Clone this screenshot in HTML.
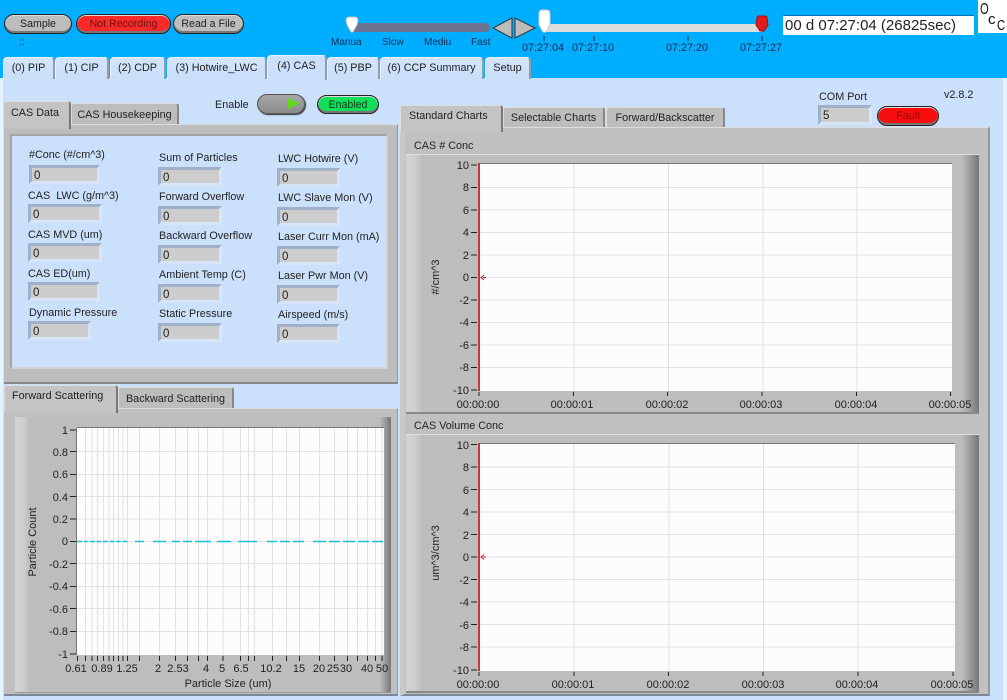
<!DOCTYPE html>
<html><head><meta charset="utf-8"><style>
html,body{margin:0;padding:0}
body{width:1007px;height:700px;position:relative;overflow:hidden;background:#cbe0fb;font:10.8px "Liberation Sans",sans-serif;color:#222}
div{position:absolute;box-sizing:border-box}
.t{white-space:nowrap;line-height:14px}
.tab{background:linear-gradient(#d4e5fb,#c9def9);border-top:1px solid #e8f2ff;border-left:1px solid #e8f2ff;border-right:2px solid #8f9db0;border-radius:4px 4px 0 0;text-align:center;line-height:21px;white-space:nowrap;height:22px;top:57px}
.gt{background:#bdbdbd;border-top:1px solid #ddd;border-left:1px solid #ddd;border-right:2px solid #888;border-radius:3px 3px 0 0;text-align:center;white-space:nowrap}
.on{background:#c4c4c4}
.b{background:#cdcdcd;border:3px solid;border-color:#9fb0c8 #d6e5f8 #d6e5f8 #9fb0c8;height:19px;padding-left:2px;line-height:16px;font-size:11.500px}
.o{border-radius:10px;border:1px solid #222;box-shadow:inset 0 -2px 0 #777,inset 0 1px 0 #ddd;text-align:center;line-height:19px;white-space:nowrap;font-size:10.6px}
.n{font-size:10px;color:#1a2a55;white-space:nowrap;line-height:12px}
svg{position:absolute;left:0;top:0}
svg text{font:11px "Liberation Sans",sans-serif;fill:#222}
</style></head><body>
<div style="left:0;top:0;width:1007px;height:78px;background:#00aeff"></div>
<div style="left:0;top:78px;width:3px;height:622px;background:#e4f4ff"></div>
<div style="left:1003px;top:78px;width:4px;height:622px;background:#e4f4ff"></div>

<div class="o" style="left:4px;top:14px;width:68px;height:20px;background:#bdbdbd">Sample</div>
<div class="o" style="left:76px;top:14px;width:95px;height:20px;background:#fb2a2a;color:#701010">Not Recording</div>
<div class="o" style="left:173px;top:14px;width:71px;height:20px;background:#bdbdbd">Read a File</div>
<div class="n" style="left:19px;top:37px">::</div>

<div style="left:352px;top:23px;width:138px;height:9px;background:#6b7390;border-radius:0 5px 5px 0"></div>
<div class="n" style="left:331px;top:37px">Manua</div><div class="n" style="left:382px;top:37px">Slow</div><div class="n" style="left:424px;top:37px">Mediu</div><div class="n" style="left:471px;top:37px">Fast</div>
<div style="left:545px;top:24px;width:217px;height:8px;background:#dcdcdc"></div>
<div class="n" style="left:522px;top:42px;font-size:10.800px">07:27:04</div><div class="n" style="left:572px;top:42px;font-size:10.800px">07:27:10</div><div class="n" style="left:666px;top:42px;font-size:10.800px">07:27:20</div><div class="n" style="left:740px;top:42px;font-size:10.800px">07:27:27</div>
<div style="left:783px;top:15px;width:191px;height:20px;background:#fff;border-top:1px solid #0a6fb0;font-size:15px;line-height:19px;padding-left:2px;color:#222;white-space:nowrap">00 d 07:27:04 (26825sec)</div>
<div style="left:978px;top:0;width:29px;height:33px;background:#fff"></div>
<div class="t" style="left:980px;top:3px;font-size:16px;color:#111;transform:scaleX(.7);transform-origin:0 0">O</div>
<div class="t" style="left:988px;top:13px;font-size:15px;color:#111">c</div>
<div class="t" style="left:997px;top:19px;font-size:15px;color:#111;transform:scaleX(.75);transform-origin:0 0">C</div>

<div class="tab" style="left:3px;width:52px">(0) PIP</div>
<div class="tab" style="left:55px;width:54px">(1) CIP</div>
<div class="tab" style="left:110px;width:56px">(2) CDP</div>
<div class="tab" style="left:167px;width:100px">(3) Hotwire_LWC</div>
<div class="tab" style="left:267px;top:55px;width:60px;height:25px;background:#cbe0fb;line-height:20px">(4) CAS</div>
<div class="tab" style="left:327px;width:53px">(5) PBP</div>
<div class="tab" style="left:380px;width:104px">(6) CCP Summary</div>
<div class="tab" style="left:485px;width:46px">Setup</div>

<div class="t" style="left:215px;top:98px">Enable</div>
<div style="left:257px;top:94px;width:48px;height:20px;border-radius:10px;background:linear-gradient(#a8a8a8,#8a8a8a);border:1px solid #555;box-shadow:1px 1px 1px #333"></div>
<div class="o" style="left:317px;top:95px;width:62px;height:19px;background:#12e05a;color:#064018">Enabled</div>

<div class="gt" style="left:71px;top:103px;width:108px;height:22px;line-height:23px">CAS Housekeeping</div>
<div style="left:4px;top:124px;width:394px;height:260px;background:#bdbdbd;border-top:1px solid #ddd;border-right:1px solid #999;border-bottom:2px solid #888"></div>
<div class="gt on" style="left:3px;top:101px;width:68px;height:28px;line-height:22px;border-right:2px solid #777;text-align:left;padding-left:7px">CAS Data</div>
<div style="left:10px;top:134px;width:378px;height:235px;background:#cbe0fb;border:2px solid;border-color:#a4a4a4 #d2d2d2 #d2d2d2 #a4a4a4"></div>

<div class="t" style="left:29px;top:148px">#Conc (#/cm^3)</div><div class="b" style="left:29px;top:165px;width:71px">0</div>
<div class="t" style="left:28px;top:189px">CAS&nbsp; LWC (g/m^3)</div><div class="b" style="left:28px;top:204px;width:74px">0</div>
<div class="t" style="left:28px;top:228px">CAS MVD (um)</div><div class="b" style="left:28px;top:243px;width:74px">0</div>
<div class="t" style="left:28px;top:267px">CAS ED(um)</div><div class="b" style="left:28px;top:282px;width:72px">0</div>
<div class="t" style="left:29px;top:306px">Dynamic Pressure</div><div class="b" style="left:28px;top:321px;width:63px">0</div>
<div class="t" style="left:159px;top:151px">Sum of Particles</div><div class="b" style="left:158px;top:167px;width:64px">0</div>
<div class="t" style="left:159px;top:190px">Forward Overflow</div><div class="b" style="left:158px;top:206px;width:64px">0</div>
<div class="t" style="left:159px;top:229px">Backward Overflow</div><div class="b" style="left:158px;top:245px;width:64px">0</div>
<div class="t" style="left:159px;top:268px">Ambient Temp (C)</div><div class="b" style="left:158px;top:284px;width:64px">0</div>
<div class="t" style="left:159px;top:307px">Static Pressure</div><div class="b" style="left:158px;top:323px;width:64px">0</div>
<div class="t" style="left:278px;top:152px">LWC Hotwire (V)</div><div class="b" style="left:277px;top:168px;width:63px">0</div>
<div class="t" style="left:278px;top:191px">LWC Slave Mon (V)</div><div class="b" style="left:277px;top:207px;width:63px">0</div>
<div class="t" style="left:278px;top:230px">Laser Curr Mon (mA)</div><div class="b" style="left:277px;top:246px;width:63px">0</div>
<div class="t" style="left:278px;top:269px">Laser Pwr Mon (V)</div><div class="b" style="left:277px;top:285px;width:63px">0</div>
<div class="t" style="left:278px;top:308px">Airspeed (m/s)</div><div class="b" style="left:277px;top:324px;width:63px">0</div>

<div class="gt" style="left:118px;top:387px;width:116px;height:22px;line-height:22px">Backward Scattering</div>
<div style="left:4px;top:408px;width:394px;height:288px;background:#c0c0c0;border-top:1px solid #ddd;border-right:1px solid #999;border-bottom:2px solid #7d8896"></div>
<div class="gt on" style="left:4px;top:385px;width:114px;height:28px;line-height:21px;border-right:2px solid #777;text-align:left;padding-left:7px">Forward Scattering</div>
<div style="left:15px;top:417px;width:376px;height:276px;background:linear-gradient(90deg,#d4d4d4,#d0d0d0 8px,#bdbdbd 14px,#bdbdbd 97%,#777);border-bottom:1px solid #999"></div>

<div class="gt" style="left:503px;top:107px;width:102px;height:21px;line-height:21px">Selectable Charts</div>
<div class="gt" style="left:606px;top:107px;width:119px;height:21px;line-height:21px">Forward/Backscatter</div>
<div style="left:400px;top:127px;width:590px;height:569px;background:#c0c0c0;border-top:1px solid #ddd;border-left:5px solid #c9c9c9;border-right:2px solid #999;border-bottom:2px solid #7d8896"></div>
<div class="gt on" style="left:400px;top:105px;width:103px;height:27px;line-height:20px;border-right:2px solid #777;text-align:left;padding-left:8px">Standard Charts</div>
<div class="t" style="left:414px;top:139px">CAS # Conc</div>
<div style="left:406px;top:154px;width:573px;height:260px;background:linear-gradient(90deg,#d2d2d2,#d0d0d0 8px,#bdbdbd 16px,#bdbdbd 97%,#777);border-top:1px solid #ddd;border-bottom:2px solid #888"></div>
<div class="t" style="left:414px;top:419px">CAS Volume Conc</div>
<div style="left:406px;top:434px;width:573px;height:259px;background:linear-gradient(90deg,#d2d2d2,#d0d0d0 8px,#bdbdbd 16px,#bdbdbd 97%,#777);border-top:1px solid #ddd;border-bottom:2px solid #888"></div>

<div class="t" style="left:819px;top:90px">COM Port</div>
<div class="b" style="left:818px;top:105px;width:54px;height:20px">5</div>
<div class="o" style="left:877px;top:106px;width:62px;height:20px;background:#f70d0d;color:#7a1010">Fault</div>
<div class="t" style="left:944px;top:88px">v2.8.2</div>

<svg width="1007" height="700" viewBox="0 0 1007 700">
<path d="M346 21q0-4 3-4h6q3 0 3 4l-1 4l-4 7h-2l-4-7z" fill="#fff" stroke="#bbb"/>
<path d="M512 18v20l-19-10z" fill="#bdbdbd" stroke="#333"/>
<path d="M515 18v20l20-10z" fill="#bdbdbd" stroke="#333"/>
<path d="M539 14q0-4 3-4h5q3 0 3 4v11l-4 7h-3l-4-7z" fill="#fff" stroke="#ccc"/>
<path d="M757 18q0-2 2-2h6q2 0 2 2l1 7l-4 6h-4l-4-6z" fill="#e21c1c" stroke="#a01010"/>
<path d="M544 36v5M594 36v5M688 36v5M762 36v5" stroke="#223" fill="none"/>
<path d="M288 98v11l12-5.500z" fill="#5fd81e"/>

<!-- chart 1 -->
<rect x="480" y="164" width="472" height="227" fill="#fcfcfc"/>
<path d="M480 187.500H952M480 210H952M480 232.500H952M480 255H952M480 277.500H952M480 300H952M480 322.500H952M480 345H952M480 367.500H952M574 164V391M668.500 164V391M763 164V391M857 164V391" stroke="#e2e2e2" fill="none"/>
<path d="M480 163.500H952" stroke="#777"/>
<path d="M479 163V391" stroke="#c43a3a" stroke-width="2"/>
<path d="M471 165h6M471 187.500h6M471 210h6M471 232.500h6M471 255h6M471 277.500h6M471 300h6M471 322.500h6M471 345h6M471 367.500h6M471 390h6M479 392v4M573.500 392v4M667.500 392v4M762 392v4M856.500 392v4M950.500 392v4" stroke="#222" fill="none"/>
<path d="M484 275l-3 2.500l3 2.500M483 277.500h3" stroke="#d01030" fill="none"/>
<g text-anchor="end"><text x="469" y="169">10</text><text x="469" y="191">8</text><text x="469" y="214">6</text><text x="469" y="236">4</text><text x="469" y="259">2</text><text x="469" y="281">0</text><text x="469" y="304">-2</text><text x="469" y="326">-4</text><text x="469" y="349">-6</text><text x="469" y="371">-8</text><text x="469" y="394">-10</text></g>
<g text-anchor="middle"><text x="478" y="408">00:00:00</text><text x="572" y="408">00:00:01</text><text x="667" y="408">00:00:02</text><text x="761" y="408">00:00:03</text><text x="856" y="408">00:00:04</text><text x="950" y="408">00:00:05</text>
<text transform="translate(439 277) rotate(-90)">#/cm^3</text></g>

<!-- chart 2 -->
<rect x="480" y="444" width="475" height="227" fill="#fcfcfc"/>
<path d="M480 467H955M480 489.500H955M480 512H955M480 534.500H955M480 557H955M480 579.500H955M480 602H955M480 624.500H955M480 647H955M574 444V671M669 444V671M763.500 444V671M858 444V671" stroke="#e2e2e2" fill="none"/>
<path d="M480 443.500H955" stroke="#777"/>
<path d="M479 443V671" stroke="#c43a3a" stroke-width="2"/>
<path d="M471 444.500h6M471 467h6M471 489.500h6M471 512h6M471 534.500h6M471 557h6M471 579.500h6M471 602h6M471 624.500h6M471 647h6M471 670h6M479 672v4M574 672v4M668.500 672v4M763 672v4M858 672v4M953 672v4" stroke="#222" fill="none"/>
<path d="M484 554.500l-3 2.500l3 2.500M483 557h3" stroke="#d01030" fill="none"/>
<g text-anchor="end"><text x="469" y="449">10</text><text x="469" y="471">8</text><text x="469" y="494">6</text><text x="469" y="516">4</text><text x="469" y="539">2</text><text x="469" y="561">0</text><text x="469" y="584">-2</text><text x="469" y="606">-4</text><text x="469" y="629">-6</text><text x="469" y="651">-8</text><text x="469" y="674">-10</text></g>
<g text-anchor="middle"><text x="478" y="688">00:00:00</text><text x="573" y="688">00:00:01</text><text x="668" y="688">00:00:02</text><text x="763" y="688">00:00:03</text><text x="857" y="688">00:00:04</text><text x="952" y="688">00:00:05</text>
<text transform="translate(439 553) rotate(-90)">um^3/cm^3</text></g>

<!-- left chart -->
<rect x="77" y="428" width="307" height="227" fill="#fcfcfc"/>
<path d="M77 451.500H384M77 474.500H384M77 496.500H384M77 519H384M77 541.500H384M77 563.500H384M77 586.500H384M77 608.500H384M77 631.500H384M85.500 428V655M92 428V655M97.500 428V655M103.500 428V655M109 428V655M113.500 428V655M118.500 428V655M123 428V655M127.500 428V655M139.500 428V655M159.500 428V655M175.500 428V655M187.500 428V655M198.500 428V655M207.500 428V655M223 428V655M240.500 428V655M248.500 428V655M254.500 428V655M272.500 428V655M286.500 428V655M299.500 428V655M319.500 428V655M334.500 428V655M347.500 428V655M357.500 428V655M367.500 428V655M375.500 428V655M382 428V655" stroke="#e2e2e2" fill="none"/>
<path d="M77 427.500H384M76.500 428V655" stroke="#777" fill="none"/>
<path d="M70 430h6M70 451.500h6M70 474.500h6M70 496.500h6M70 519h6M70 541.500h6M70 563.500h6M70 586.500h6M70 608.500h6M70 631.500h6M70 654h6M77.500 656v5M85.500 656v5M92 656v5M97.500 656v5M103.500 656v5M109 656v5M113.500 656v5M118.500 656v5M123 656v5M127.500 656v5M139.500 656v5M159.500 656v5M175.500 656v5M187.500 656v5M198.500 656v5M207.500 656v5M223 656v5M240.500 656v5M248.500 656v5M254.500 656v5M272.500 656v5M286.500 656v5M299.500 656v5M319.500 656v5M334.500 656v5M347.500 656v5M357.500 656v5M367.500 656v5M375.500 656v5M382 656v5" stroke="#222" fill="none"/>
<path d="M77 541.500H128" stroke="#1fbfd0" stroke-width="1.500" stroke-dasharray="5 1.500"/>
<path d="M135 541.500h9M153 541.500h13M172 541.500h8M183 541.500h9M195 541.500h16M217 541.500h14M238 541.500h19M267 541.500h10M280 541.500h10M293 541.500h11M313 541.500h13M329 541.500h11M343 541.500h12M358 541.500h11M372 541.500h11" stroke="#1fbfd0" stroke-width="1.500" fill="none"/>
<g text-anchor="end"><text x="68" y="434">1</text><text x="68" y="456">0.8</text><text x="68" y="478">0.6</text><text x="68" y="501">0.4</text><text x="68" y="523">0.2</text><text x="68" y="545">0</text><text x="68" y="568">-0.2</text><text x="68" y="590">-0.4</text><text x="68" y="613">-0.6</text><text x="68" y="635">-0.8</text><text x="68" y="658">-1</text></g>
<g text-anchor="middle"><text x="76" y="672">0.61</text><text x="102" y="672">0.89</text><text x="127" y="672">1.25</text><text x="158" y="672">2</text><text x="178" y="672">2.53</text><text x="206" y="672">4</text><text x="222" y="672">5</text><text x="241" y="672">6.5</text><text x="271" y="672">10.2</text><text x="299" y="672">15</text><text x="319" y="672">20</text><text x="333" y="672">25</text><text x="346" y="672">30</text><text x="367" y="672">40</text><text x="382" y="672">50</text>
<text x="228" y="687">Particle Size (um)</text>
<text transform="translate(36 542) rotate(-90)">Particle Count</text></g>
</svg>
</body></html>
